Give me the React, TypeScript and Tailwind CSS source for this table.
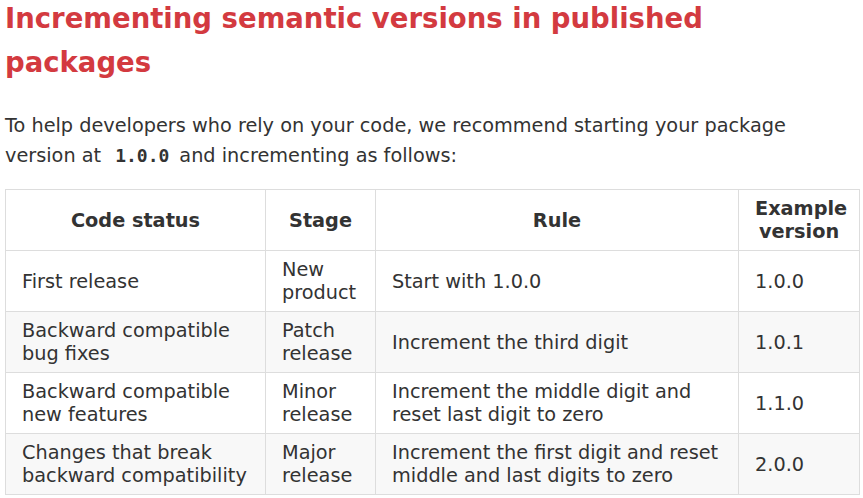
const rows = [
  { status: "First release", stage: ["New", "product"], rule: "Start with 1.0.0", version: "1.0.0" },
  { status: "Backward compatible bug fixes", stage: ["Patch", "release"], rule: "Increment the third digit", version: "1.0.1" },
  { status: "Backward compatible new features", stage: ["Minor", "release"], rule: "Increment the middle digit and reset last digit to zero", version: "1.1.0" },
  { status: "Changes that break backward compatibility", stage: ["Major", "release"], rule: "Increment the first digit and reset middle and last digits to zero", version: "2.0.0" },
];

export default function App() {
  return (
    <div className="bg-white px-[5px] text-[#333] font-['DejaVu_Sans',sans-serif]">
      <h1 className="text-[27.5px] leading-[44px] font-bold text-[#d33a40] -mt-[4px]">
        Incrementing semantic versions in published packages
      </h1>
      <p className="mt-[27px] text-[19.3px] leading-[30px] max-w-[820px]">
        To help developers who rely on your code, we recommend starting your package version at
        <code className="ml-[14px] mr-[10px] font-['DejaVu_Sans_Mono',monospace] font-bold text-[18px]">1.0.0</code>
        and incrementing as follows:
      </p>
      <table className="mt-[18px] w-[854px] table-fixed border-collapse text-[19.3px] leading-[23px]">
        <colgroup>
          <col className="w-[260px]" />
          <col className="w-[110px]" />
          <col className="w-[363px]" />
          <col className="w-[121px]" />
        </colgroup>
        <thead>
          <tr className="h-[61px]">
            <th className="border border-[#ddd] px-4 py-1 font-bold">Code status</th>
            <th className="border border-[#ddd] px-4 py-1 font-bold">Stage</th>
            <th className="border border-[#ddd] px-4 py-1 font-bold">Rule</th>
            <th className="border border-[#ddd] px-4 py-1 font-bold">Example version</th>
          </tr>
        </thead>
        <tbody>
          {rows.map((r, i) => (
            <tr key={r.version} className={`h-[61px] ${i % 2 === 1 ? "bg-[#f8f8f8]" : "bg-white"}`}>
              <td className="border border-[#ddd] px-4 py-1 align-middle">{r.status}</td>
              <td className="border border-[#ddd] px-4 py-1 align-middle">
                {r.stage[0]}
                <br />
                {r.stage[1]}
              </td>
              <td className="border border-[#ddd] px-4 py-1 align-middle">{r.rule}</td>
              <td className="border border-[#ddd] px-4 py-1 align-middle">{r.version}</td>
            </tr>
          ))}
        </tbody>
      </table>
    </div>
  );
}
